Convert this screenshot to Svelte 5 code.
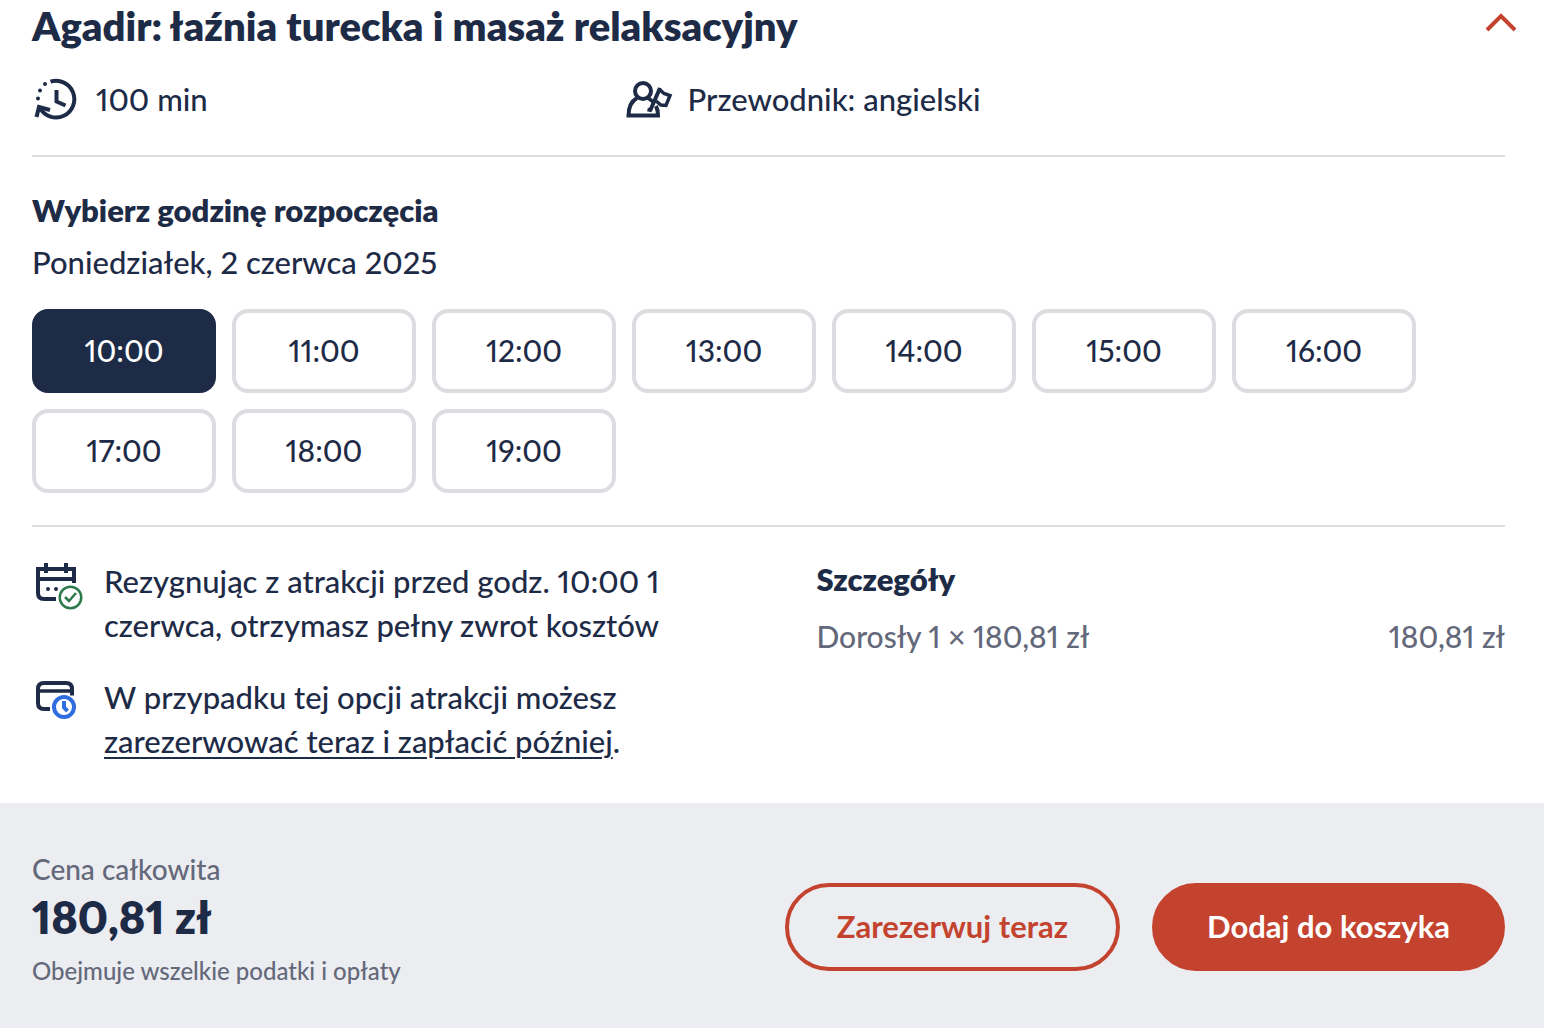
<script>
  const times = ['10:00', '11:00', '12:00', '13:00', '14:00', '15:00', '16:00', '17:00', '18:00', '19:00'];
  let selected = $state('10:00');
</script>

<article class="option">
  <header class="head">
    <h2>Agadir: łaźnia turecka i masaż relaksacyjny</h2>
    <button class="collapse" type="button" aria-label="Zwiń">
      <svg viewBox="0 0 32 20" width="32" height="20" fill="none" stroke="currentColor" stroke-width="4">
        <path d="M2 18 16 4 30 18" />
      </svg>
    </button>
  </header>

  <div class="body">
    <ul class="facts">
      <li>
        <svg class="icon" viewBox="0 0 48 48" fill="none" stroke="currentColor" stroke-width="4">
          <path d="M18.500 6.700A18.300 18.300 0 1 1 8 33" />
          <path d="M4.500 42 7 32l11 3" />
          <path d="M24.500 15v11.500l9 4" />
          <g fill="currentColor" stroke="none">
            <circle cx="13" cy="9" r="2" />
            <circle cx="8" cy="15.500" r="2" />
            <circle cx="6" cy="23.500" r="2" />
          </g>
        </svg>
        <span>100 min</span>
      </li>
      <li>
        <svg class="icon" viewBox="0 0 48 48" fill="none" stroke="currentColor" stroke-width="4">
          <circle cx="19" cy="16" r="8" />
          <path d="M13 23C7 26.500 4.500 32 4.500 40.500H34C34 37 33.500 34 32 31" />
          <path d="M26 36 36 13" />
          <path d="M35 14l5 4.500 6 2-4 10-5-.5-5-4" stroke-width="3.500" />
          <path d="M23.500 22.500l6.500 5M23.500 34.500l4 1" stroke-width="3.500" />
        </svg>
        <span>Przewodnik: angielski</span>
      </li>
    </ul>

    <section class="start">
      <h3>Wybierz godzinę rozpoczęcia</h3>
      <p>Poniedziałek, 2 czerwca 2025</p>
      <div class="times">
        {#each times as time}
          <button type="button" class="time" class:active={selected === time} aria-pressed={selected === time} onclick={() => (selected = time)}>{time}</button>
        {/each}
      </div>
    </section>

    <div class="info">
      <ul class="policies">
        <li>
          <svg class="icon" viewBox="0 0 48 48" fill="none" stroke="currentColor" stroke-width="4">
            <path d="M42 24V10H6v24q0 6 6 6h12M6 20h36M14 4v10M34 4v10" />
            <circle cx="16" cy="30" r="2" fill="currentColor" stroke="none" />
            <circle cx="24" cy="30" r="2" fill="currentColor" stroke="none" />
            <g class="ok">
              <circle cx="38.500" cy="38.500" r="10.750" stroke-width="2.500" />
              <path d="m33 38 4 4 7-8" stroke-width="2.500" />
            </g>
          </svg>
          <p>Rezygnując z atrakcji przed godz. 10:00 1 czerwca, otrzymasz pełny zwrot kosztów</p>
        </li>
        <li>
          <svg class="icon" viewBox="0 0 48 48" fill="none" stroke="currentColor" stroke-width="4">
            <path d="M40 20.500V14q0-6-6-6H12q-6 0-6 6v14q0 6 6 6h6" />
            <path d="M6 16h34" stroke-width="3.500" />
            <g class="later">
              <circle cx="32" cy="32" r="10" />
              <path d="M32 26v6.500l3.500 3.500" />
            </g>
          </svg>
          <p>W przypadku tej opcji atrakcji możesz <a href="#later">zarezerwować teraz i zapłacić później</a>.</p>
        </li>
      </ul>
      <section class="details">
        <h3>Szczegóły</h3>
        <div class="line"><span>Dorosły 1 × 180,81 zł</span><span>180,81 zł</span></div>
      </section>
    </div>
  </div>

  <footer>
    <div class="total">
      <span class="label">Cena całkowita</span>
      <strong>180,81 zł</strong>
      <span class="note">Obejmuje wszelkie podatki i opłaty</span>
    </div>
    <div class="actions">
      <button type="button" class="cta outline">Zarezerwuj teraz</button>
      <button type="button" class="cta solid">Dodaj do koszyka</button>
    </div>
  </footer>
</article>

<style>
  :global(body) {
    background: #fff;
  }
  .option {
    display: flex;
    flex-direction: column;
    min-height: 100vh;
    font-family: Lato, 'Liberation Sans', sans-serif;
    font-size: 31px;
    font-weight: 500;
    font-variant-numeric: proportional-nums;
    line-height: 44px;
    color: #1e2b47;
  }
  h2, h3, p, ul {
    margin: 0;
    padding: 0;
  }
  ul {
    list-style: none;
  }
  button {
    font: inherit;
    font-variant-numeric: inherit;
    cursor: pointer;
  }
  svg {
    display: block;
    flex: none;
  }
  .head {
    display: flex;
    justify-content: space-between;
    align-items: flex-start;
    padding: 0 27px 0 32px;
  }
  h2 {
    font-size: 40px;
    font-weight: 800;
    line-height: 52px;
  }
  .collapse {
    padding: 12px 0 0;
    border: 0;
    background: none;
    color: #c4432f;
  }
  .body {
    padding: 0 39px 40px 32px;
  }
  .icon {
    width: 48px;
    height: 48px;
    overflow: visible;
  }
  .facts {
    display: grid;
    grid-template-columns: 2fr 3fr;
    gap: 4px;
    padding: 23px 0 32px;
    border-bottom: 2px solid #dcdde1;
  }
  .facts li {
    display: flex;
    align-items: center;
    gap: 16px;
  }
  .start {
    padding: 31px 0 32px;
    border-bottom: 2px solid #dcdde1;
  }
  h3 {
    font-size: 31px;
    font-weight: 800;
    line-height: 44px;
  }
  .start p {
    margin-top: 8px;
  }
  .times {
    display: flex;
    flex-wrap: wrap;
    gap: 16px;
    margin-top: 25px;
  }
  .time {
    width: 184px;
    height: 84px;
    padding: 0 0 2px;
    border: 4px solid #dcdde1;
    border-radius: 16px;
    background: #fff;
    color: #1e2b47;
    font-size: 30px;
  }
  .time.active {
    border-color: #1e2b47;
    background: #1e2b47;
    color: #fff;
  }
  .info {
    display: grid;
    grid-template-columns: 1fr 1fr;
    gap: 96px;
    padding-top: 32px;
  }
  .policies {
    display: grid;
    gap: 28px;
  }
  .policies li {
    display: flex;
    gap: 24px;
  }
  .policies p {
    max-width: 576px;
  }
  .ok {
    color: #2c7a4b;
  }
  .later {
    color: #2f6de1;
  }
  .ok, .later {
    stroke: currentColor;
  }
  a {
    color: inherit;
    text-decoration-thickness: 2px;
    text-underline-offset: 4px;
  }
  .details h3 {
    line-height: 40px;
  }
  .line {
    display: flex;
    justify-content: space-between;
    margin-top: 15px;
    color: #63687a;
    font-size: 30px;
  }
  footer {
    display: flex;
    flex: 1;
    justify-content: space-between;
    align-items: flex-start;
    padding: 48px 39px 40px 32px;
    background: #ecedf1;
  }
  .total {
    display: flex;
    flex-direction: column;
  }
  .label {
    font-size: 28px;
    line-height: 36px;
    color: #63687a;
  }
  strong {
    font-size: 45px;
    font-weight: 800;
    line-height: 60px;
  }
  .note {
    margin-top: 8px;
    font-size: 24px;
    line-height: 32px;
    color: #63687a;
  }
  .actions {
    display: flex;
    gap: 32px;
    padding-top: 32px;
  }
  .cta {
    height: 88px;
    padding: 0 48px 2px;
    border: 4px solid #c4432f;
    border-radius: 44px;
    font-weight: 700;
  }
  .outline {
    background: none;
    color: #c4432f;
  }
  .solid {
    padding: 0 51px 2px;
    background: #c4432f;
    color: #fff;
  }
</style>
